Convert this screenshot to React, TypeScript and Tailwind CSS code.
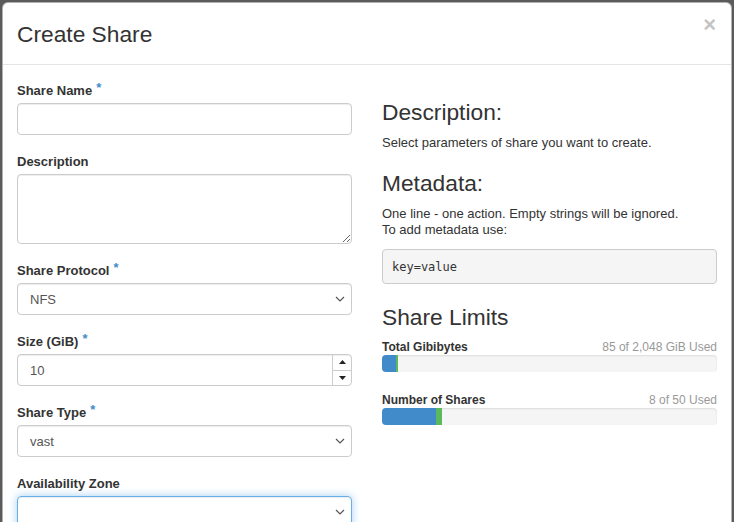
import React from "react";

type Limit = { label: string; used: number; adding: number; max: number; text: string };

const limits: Limit[] = [
  { label: "Total Gibibytes", used: 85, adding: 10, max: 2048, text: "85 of 2,048 GiB Used" },
  { label: "Number of Shares", used: 8, adding: 1, max: 50, text: "8 of 50 Used" },
];

function Required() {
  return <span className="ml-[4px] align-top text-[13px] leading-none text-[#428bca]">*</span>;
}

function Chevron() {
  return (
    <svg width="10" height="6" viewBox="0 0 10 6" className="shrink-0">
      <path d="M1 1l4 4 4-4" fill="none" stroke="#555" strokeWidth="1.2" />
    </svg>
  );
}

function FieldLabel({ text, required }: { text: string; required?: boolean }) {
  return (
    <label className="mb-[3px] block pt-[2px] text-[13px] font-bold leading-[19px] text-[#333]">
      {text}
      {required && <Required />}
    </label>
  );
}

function FakeSelect({ value, focused }: { value: string; focused?: boolean }) {
  return (
    <div
      className={
        focused
          ? "flex h-[32px] items-center justify-between rounded-[4px] border border-[#66afe9] pl-[12px] pr-[6px] text-[13px] text-[#555] shadow-[inset_0_1px_1px_rgba(0,0,0,0.075),0_0_8px_rgba(102,175,233,0.6)]"
          : "flex h-[32px] items-center justify-between rounded-[4px] border border-[#ccc] pl-[12px] pr-[6px] text-[13px] text-[#555] shadow-[inset_0_1px_1px_rgba(0,0,0,0.075)]"
      }
    >
      <span className="pt-[1px]">{value}</span>
      <Chevron />
    </div>
  );
}

function NumberInput({ value }: { value: string }) {
  return (
    <div className="flex h-[32px] rounded-[4px] border border-[#ccc] text-[13px] text-[#555] shadow-[inset_0_1px_1px_rgba(0,0,0,0.075)]">
      <div className="flex flex-1 items-center pl-[12px] pt-[2px]">{value}</div>
      <div className="flex w-[19px] flex-col border-l border-[#ccc]">
        <div className="flex flex-1 items-center justify-center border-b border-[#ccc]">
          <svg width="7" height="4" viewBox="0 0 7 4">
            <path d="M0 4L3.5 0L7 4z" fill="#222" />
          </svg>
        </div>
        <div className="flex flex-1 items-center justify-center">
          <svg width="7" height="4" viewBox="0 0 7 4">
            <path d="M0 0L3.5 4L7 0z" fill="#222" />
          </svg>
        </div>
      </div>
    </div>
  );
}

export default function App() {
  return (
    <div
      className="h-[522px] w-[734px] overflow-hidden bg-[#5b5b5b] pl-[2px] pt-[2px] text-[#333]"
      style={{ fontFamily: '"Liberation Sans", Arial, sans-serif' }}
    >
      <div className="w-[730px] rounded-[6px] border border-[rgba(0,0,0,0.3)] bg-white">
        <div className="flex h-[62px] items-start justify-between border-b border-[#e5e5e5] pl-[14px] pr-[15px]">
          <h4 className="self-center pt-[2px] text-[22.75px] leading-[25px] text-[#333]">Create Share</h4>
          <button className="mt-[11px] text-[22px] font-bold leading-none text-[#c4c4c4]">×</button>
        </div>

        <div className="grid grid-cols-[335px_335px] gap-x-[30px] px-[14px] pt-[14px] pb-[20px]">
          <div>
            <FieldLabel text="Share Name" required />
            <input
              className="block h-[32px] w-full rounded-[4px] border border-[#ccc] px-[12px] text-[13px] text-[#555] shadow-[inset_0_1px_1px_rgba(0,0,0,0.075)] outline-none"
              defaultValue=""
            />

            <div className="mt-[15px]">
              <FieldLabel text="Description" />
              <textarea className="block h-[70px] w-full rounded-[4px] border border-[#ccc] px-[12px] text-[13px] shadow-[inset_0_1px_1px_rgba(0,0,0,0.075)] outline-none" />
            </div>

            <div className="mt-[15px]">
              <FieldLabel text="Share Protocol" required />
              <FakeSelect value="NFS" />
            </div>

            <div className="mt-[15px]">
              <FieldLabel text="Size (GiB)" required />
              <NumberInput value="10" />
            </div>

            <div className="mt-[15px]">
              <FieldLabel text="Share Type" required />
              <FakeSelect value="vast" />
            </div>

            <div className="mt-[15px]">
              <FieldLabel text="Availability Zone" />
              <FakeSelect value="" focused />
            </div>
          </div>

          <div className="text-[13px] leading-4">
            <h3 className="mt-[21px] text-[22.75px] leading-[25px]">Description:</h3>
            <p className="mt-[10px]">Select parameters of share you want to create.</p>
            <h3 className="mt-[20px] text-[22.75px] leading-[25px]">Metadata:</h3>
            <p className="mt-[10px]">
              One line - one action. Empty strings will be ignored.
              <br />
              To add metadata use:
            </p>
            <pre
              className="mt-[11px] rounded-[4px] border border-[#ccc] bg-[#f5f5f5] px-[9px] py-[8.5px] text-[12px] leading-4 text-[#333]"
              style={{ fontFamily: '"DejaVu Sans Mono", monospace' }}
            >
              key=value
            </pre>
            <h3 className="mt-[21px] text-[22.75px] leading-[25px]">Share Limits</h3>
            {limits.map((l, i) => (
              <div key={l.label} className={i === 0 ? "mt-[8px]" : "mt-[19px]"}>
                <div className="flex justify-between pt-[1px] text-[12px] leading-[16px]">
                  <strong>{l.label}</strong>
                  <span className="text-[#999]">{l.text}</span>
                </div>
                <div className="flex h-[17px] overflow-hidden rounded-[4px] bg-[#f5f5f5] shadow-[inset_0_1px_2px_rgba(0,0,0,0.1)]">
                  <div className="h-full bg-[#428bca]" style={{ width: `${(l.used / l.max) * 100}%` }} />
                  <div className="h-full bg-[#5cb85c]" style={{ width: `${(l.adding / l.max) * 100}%` }} />
                </div>
              </div>
            ))}
          </div>
        </div>
      </div>
    </div>
  );
}
